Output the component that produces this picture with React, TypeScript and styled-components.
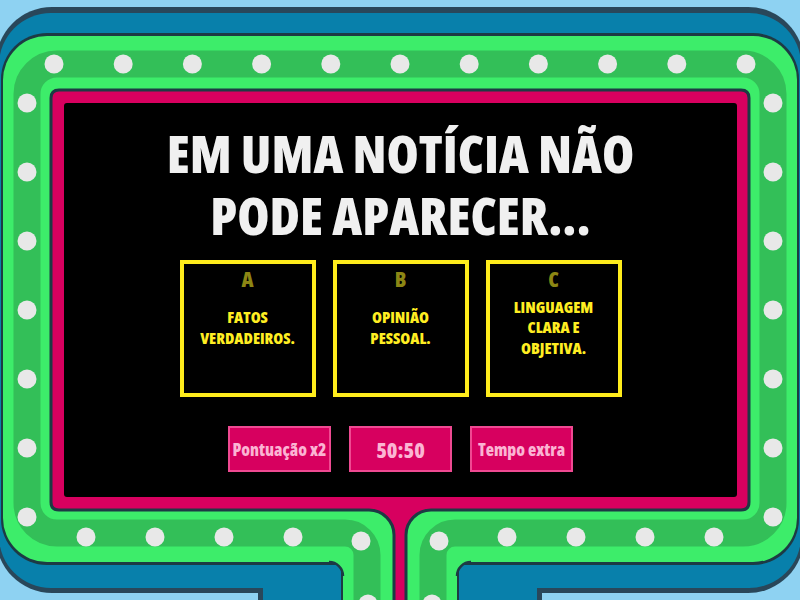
import React from "react";
import styled, { createGlobalStyle } from "styled-components";

const GlobalStyle = createGlobalStyle`
  html, body { margin: 0; padding: 0; background: #8ed2f2; overflow: hidden; }
  * { box-sizing: border-box; }
`;

const FONT = `"Open Sans", "DejaVu Sans Condensed", "Liberation Sans", sans-serif`;

const Stage = styled.div`
  position: relative;
  width: 800px;
  height: 600px;
  overflow: hidden;
  padding: 103px 63px 103px 64px;
  display: flex;
  font-family: ${FONT};
  font-stretch: 75%;
`;

const FrameArt = styled.svg`
  position: absolute;
  inset: 0;
  width: 800px;
  height: 600px;
`;

const Screen = styled.main`
  position: relative;
  flex: 1;
  background: #000;
  border-radius: 3px;
  display: flex;
  flex-direction: column;
  align-items: center;
  padding-top: 19px;
`;

const Question = styled.h1`
  margin: 0;
  width: 560px;
  color: #f0f0f0;
  font-size: 52px;
  line-height: 62px;
  font-weight: 800;
  font-stretch: 75%;
  text-align: center;
  text-transform: uppercase;
`;

const Answers = styled.div`
  margin-top: 14px;
  display: flex;
  gap: 17px;
`;

const AnswerBox = styled.button`
  width: 136px;
  height: 137px;
  background: #000;
  border: 4px solid #ffec1c;
  padding: 3px 8px 5px;
  display: grid;
  grid-template-rows: 1fr auto 1fr;
  justify-items: center;
  font-family: ${FONT};
  font-stretch: 75%;
  cursor: pointer;
`;

const Letter = styled.span`
  color: #8c8614;
  font-size: 21px;
  line-height: 24px;
  font-weight: 800;
`;

const AnswerText = styled.span`
  color: #ffee22;
  font-size: 16px;
  line-height: 20.5px;
  font-weight: 800;
  text-align: center;
  text-transform: uppercase;
`;

const PowerUps = styled.div`
  margin-top: 29px;
  display: flex;
  gap: 18px;
`;

const PowerButton = styled.button<{ $big?: boolean }>`
  width: 103px;
  height: 46px;
  background: #d7005f;
  border: 2px solid #ef4a92;
  color: #fbb4d3;
  font-family: ${FONT};
  font-stretch: 75%;
  font-size: ${(p) => (p.$big ? "21.5px" : "17px")};
  font-weight: 800;
  white-space: nowrap;
  padding: 0;
  cursor: pointer;
`;

const topDots = Array.from({ length: 11 }, (_, i) => [54 + 69.2 * i, 64]);
const sideY = [103, 172, 241, 310, 379, 448, 517];
const leftDots = sideY.map((y) => [27, y]);
const rightDots = sideY.map((y) => [773, y]);
const bottomDots = [
  [86, 537], [155, 537], [224, 537], [293, 537], [361, 541],
  [439, 541], [507, 537], [576, 537], [645, 537], [714, 537],
  [368, 604], [432, 604],
];
const dots = [...topDots, ...leftDots, ...rightDots, ...bottomDots];

const NAVY = "#29475a";
const LINE = "#1d3a44";
const BLUE = "#0880ab";
const GREEN = "#3ded6a";
const DGREEN = "#33bf58";
const PINK = "#d7005f";

function Frame() {
  return (
    <FrameArt viewBox="0 0 800 600" aria-hidden="true">
      <rect x="0" y="0" width="800" height="600" fill="#8ed2f2" />
      <rect x="-4" y="7" width="808" height="586" rx="56" fill={NAVY} />
      <rect x="258" y="540" width="284" height="70" fill={NAVY} />
      <rect x="-1" y="13" width="802" height="575" rx="52" fill={BLUE} />
      <rect x="263" y="540" width="274" height="70" fill={BLUE} />

      <rect x="1" y="33" width="798" height="532" rx="46" fill={LINE} />
      <rect x="341" y="500" width="118" height="110" fill={LINE} />
      <rect x="3" y="36" width="794" height="526" rx="44" fill={GREEN} />
      <rect x="343" y="500" width="114" height="110" fill={GREEN} />
      <path d="M 343 562 L 343 576 A 14 14 0 0 0 329 562 Z" fill={GREEN} />
      <path d="M 457 562 L 471 562 A 14 14 0 0 0 457 576 Z" fill={GREEN} />
      <path d="M 343 576 A 14 14 0 0 0 329 562" fill="none" stroke={LINE} strokeWidth="2.5" />
      <path d="M 471 562 A 14 14 0 0 0 457 576" fill="none" stroke={LINE} strokeWidth="2.5" />

      <path
        d="M 367 612 L 367 555 A 22 22 0 0 0 345 533 L 57 533 A 30 30 0 0 1 27 503 L 27 94 A 30 30 0 0 1 57 64 L 743 64 A 30 30 0 0 1 773 94 L 773 503 A 30 30 0 0 1 743 533 L 455 533 A 22 22 0 0 0 433 555 L 433 612"
        fill="none"
        stroke={DGREEN}
        strokeWidth="27"
      />

      <path
        d="M 59 90 H 741 Q 749 90 749 98 V 502 Q 749 510 741 510 H 431 A 25 25 0 0 0 406 535 V 612 H 394 V 535 A 25 25 0 0 0 369 510 H 59 Q 51 510 51 502 V 98 Q 51 90 59 90 Z"
        fill={PINK}
        stroke={LINE}
        strokeWidth="3"
      />

      {dots.map(([cx, cy], i) => (
        <circle key={i} cx={cx} cy={cy} r="9.5" fill="#e8e8e8" />
      ))}
    </FrameArt>
  );
}

const answers = [
  { letter: "A", text: "Fatos verdadeiros." },
  { letter: "B", text: "Opinião pessoal." },
  { letter: "C", text: "Linguagem clara e objetiva." },
];

export default function App() {
  return (
    <>
      <GlobalStyle />
      <Stage>
        <Frame />
        <Screen>
          <Question>Em uma notícia não pode aparecer...</Question>
          <Answers>
            {answers.map((a) => (
              <AnswerBox key={a.letter}>
                <Letter>{a.letter}</Letter>
                <AnswerText>{a.text}</AnswerText>
                <span />
              </AnswerBox>
            ))}
          </Answers>
          <PowerUps>
            <PowerButton>Pontuação x2</PowerButton>
            <PowerButton $big>50:50</PowerButton>
            <PowerButton>Tempo extra</PowerButton>
          </PowerUps>
        </Screen>
      </Stage>
    </>
  );
}
